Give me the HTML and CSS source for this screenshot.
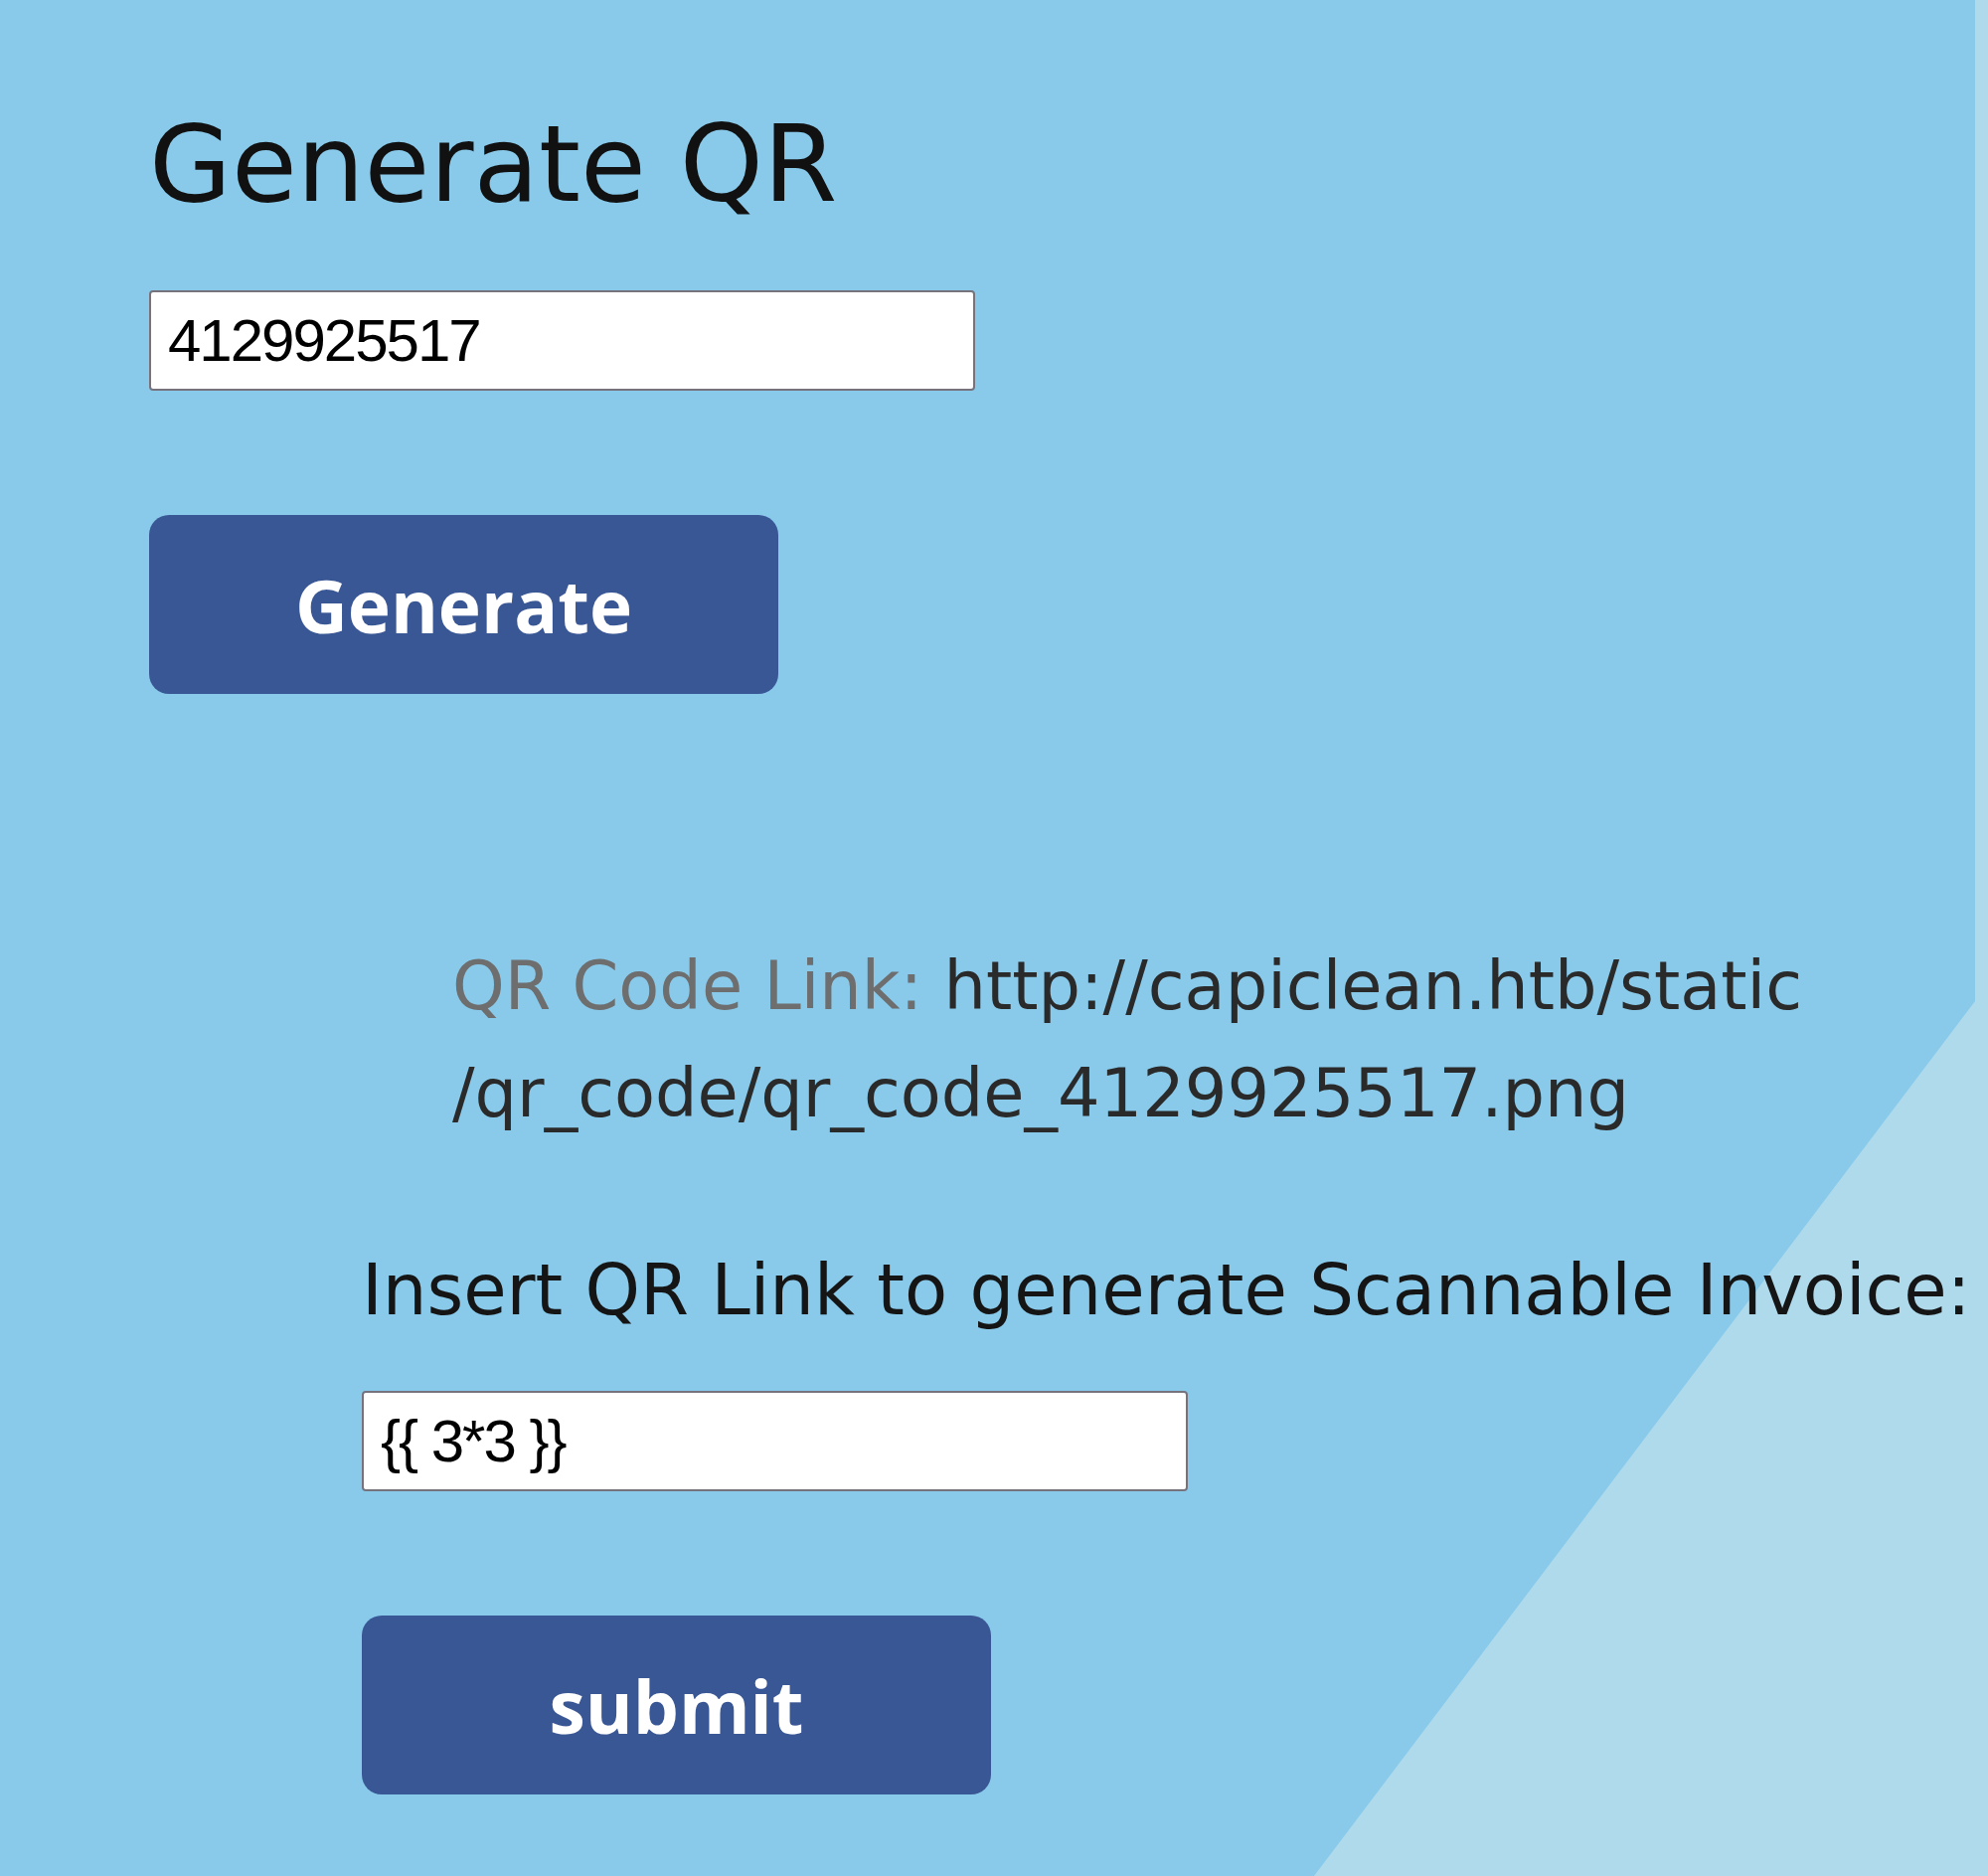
FILE: index.html
```html
<!DOCTYPE html>
<html lang="en">
<head>
<meta charset="utf-8">
<title>Generate QR</title>
<link rel="stylesheet" href="styles.css">
</head>
<body>
<main class="page">
  <section class="gen">
    <h1 class="title">Generate QR</h1>
    <form class="form gen-form">
      <input class="field" type="text" value="4129925517">
      <button class="btn" type="button">Generate</button>
    </form>
  </section>
  <section class="scan">
    <p class="qr-link"><span class="qr-label">QR Code Link:</span> <span class="qr-url">http://capiclean.htb/static<br>/qr_code/qr_code_4129925517.png</span></p>
    <form class="form scan-form">
      <label class="scan-label" for="invoice">Insert QR Link to generate Scannable Invoice:</label>
      <input class="field" id="invoice" type="text" value="{{ 3*3 }}">
      <button class="btn" type="button">submit</button>
    </form>
  </section>
</main>
</body>
</html>
```
FILE: styles.css
```css
html, body {
  margin: 0;
  padding: 0;
}
body {
  min-height: 100vh;
  background: #afdaec;
  position: relative;
  overflow: hidden;
  font-family: "DejaVu Sans", sans-serif;
  color: #111;
}
body::before {
  content: "";
  position: absolute;
  inset: 0;
  background: #89caeb;
  clip-path: polygon(0 0, 1987px 0, 1987px 1007px, 1322px 1887px, 0 1887px);
  z-index: 0;
}
.page {
  position: relative;
  z-index: 1;
  padding: 100px 0 0 150px;
  display: flex;
  flex-direction: column;
}
.title {
  margin: 0;
  font-size: 107px;
  font-weight: 400;
  line-height: 130px;
  color: #111;
}
.form {
  display: flex;
  flex-direction: column;
  align-items: flex-start;
}
.gen-form {
  margin-top: 62px;
  gap: 125px;
}
.field {
  box-sizing: border-box;
  width: 831px;
  height: 101px;
  margin: 0;
  padding: 0 0 0 17px;
  border: 2px solid #76737d;
  border-radius: 4px;
  background: #fff;
  font-family: "Liberation Sans", Arial, sans-serif;
  font-size: 60px;
  letter-spacing: -2px;
  color: #000;
}
.btn {
  width: 633px;
  height: 180px;
  margin: 0;
  border: none;
  border-radius: 20px;
  background: #3a5795;
  color: #fff;
  font-family: "Open Sans", "Noto Sans", sans-serif;
  font-weight: 700;
  font-size: 73px;
  cursor: pointer;
}
.scan {
  margin-top: 240px;
  padding-left: 214px;
  display: flex;
  flex-direction: column;
}
.qr-link {
  margin: 0;
  padding-left: 91px;
  font-size: 67px;
  line-height: 108px;
  white-space: nowrap;
}
.qr-label {
  color: #6e6e6e;
}
.qr-url {
  color: #2a2a2a;
}
.scan-form {
  margin-top: 92px;
}
.scan-label {
  font-size: 70.5px;
  line-height: 105px;
  color: #151515;
  white-space: nowrap;
}
.scan-form .field {
  margin-top: 48px;
}
.scan-form .btn {
  margin-top: 125px;
}
```
